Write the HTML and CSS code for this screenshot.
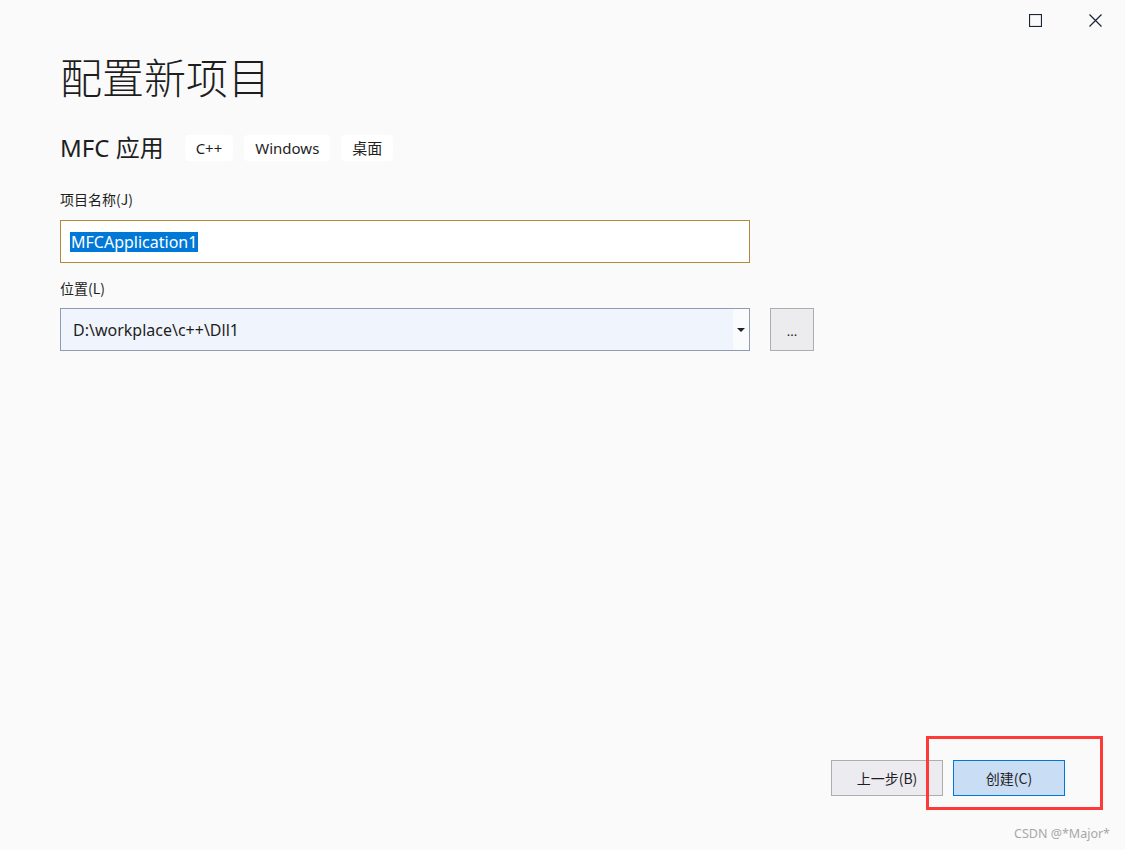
FILE: index.html
```html
<!DOCTYPE html>
<html lang="zh-CN">
<head>
<meta charset="utf-8">
<title>配置新项目</title>
<link rel="stylesheet" href="styles.css">
</head>
<body>
<div class="window">
  <div class="titlebar">
    <div class="ctl">
      <svg width="13" height="13" viewBox="0 0 13 13"><rect x="0.5" y="0.5" width="12" height="12" fill="none" stroke="#1b2433" stroke-width="1.2"/></svg>
    </div>
    <div class="ctl">
      <svg width="13" height="13" viewBox="0 0 13 13"><path d="M0.5 0.5 L12.5 12.5 M12.5 0.5 L0.5 12.5" stroke="#1b2433" stroke-width="1.2" fill="none"/></svg>
    </div>
  </div>

  <main class="content">
    <h1 class="title">配置新项目</h1>
    <div class="subrow">
      <span class="subtitle">MFC 应用</span>
      <div class="tags">
        <span class="tag">C++</span>
        <span class="tag">Windows</span>
        <span class="tag">桌面</span>
      </div>
    </div>

    <label class="label first">项目名称(J)</label>
    <div class="textbox"><span class="sel">MFCApplication1</span></div>

    <label class="label">位置(L)</label>
    <div class="locrow">
      <div class="combo">
        <span class="combo-text">D:\workplace\c++\Dll1</span>
        <span class="combo-drop"><span class="arrow"></span></span>
      </div>
      <div class="browse">...</div>
    </div>
  </main>

  <footer class="footer">
    <div class="actions">
      <button class="btn">上一步(B)</button>
      <button class="btn primary">创建(C)<span class="mark"></span></button>
    </div>
    <div class="watermark">CSDN @*Major*</div>
  </footer>
</div>
</body>
</html>
```

FILE: styles.css
```css
* { box-sizing: border-box; }

html, body {
  margin: 0;
  padding: 0;
  background: #fafafa;
}

body {
  font-family: "Noto Sans", "Noto Sans CJK SC", sans-serif;
  color: #1e1e1e;
}

.window {
  height: 850px;
  display: flex;
  flex-direction: column;
}

.titlebar {
  height: 40px;
  display: flex;
  justify-content: flex-end;
}

.ctl {
  width: 60px;
  height: 40px;
  display: flex;
  align-items: center;
  justify-content: center;
}

.content {
  padding-left: 60px;
}

.title {
  margin: 12px 0 0 0;
  font-family: "Noto Sans CJK SC", sans-serif;
  font-weight: 300;
  font-size: 42px;
  line-height: 48px;
  letter-spacing: 0;
}

.subrow {
  display: flex;
  align-items: center;
  margin-top: 35px;
  height: 26px;
}

.subtitle {
  font-family: "Noto Sans", "Noto Sans CJK SC", sans-serif;
  font-size: 24px;
  line-height: 26px;
}

.tags {
  display: flex;
  gap: 11px;
  margin-left: 21px;
}

.tag {
  background: #ffffff;
  border-radius: 4px;
  height: 26px;
  padding: 0 11px;
  font-size: 15px;
  line-height: 26px;
}

.label {
  display: block;
  font-family: "Noto Sans CJK SC", sans-serif;
  font-size: 14px;
  line-height: 20px;
  margin-top: 15px;
}

.label.first {
  margin-top: 28px;
}

.textbox {
  margin-top: 11px;
  width: 690px;
  height: 43px;
  border: 1px solid #b08a3a;
  background: #ffffff;
  display: flex;
  align-items: center;
  padding-left: 9px;
}

.sel {
  background: #0078d7;
  color: #ffffff;
  font-size: 16px;
  line-height: 20px;
  padding: 0 1px;
}

.locrow {
  display: flex;
  gap: 20px;
  margin-top: 10px;
}

.combo {
  width: 690px;
  height: 43px;
  border: 1px solid #8e9bb1;
  background: #f0f4fc;
  display: flex;
  align-items: stretch;
}

.combo-text {
  flex: 1;
  display: flex;
  align-items: center;
  padding-left: 12px;
  font-size: 16px;
}

.combo-drop {
  width: 16px;
  background: #fafbfd;
  display: flex;
  align-items: center;
  justify-content: center;
}

.arrow {
  width: 0;
  height: 0;
  border-left: 4px solid transparent;
  border-right: 4px solid transparent;
  border-top: 4px solid #1e1e2e;
}

.browse {
  width: 44px;
  height: 43px;
  border: 1px solid #adadad;
  background: #ececef;
  display: flex;
  align-items: center;
  justify-content: center;
  font-size: 13px;
  padding-top: 3px;
  color: #1e1e1e;
}

.footer {
  margin-top: auto;
  display: flex;
  flex-direction: column;
  align-items: flex-end;
  padding-bottom: 8px;
}

.actions {
  display: flex;
  gap: 10px;
  padding-right: 60px;
}

.btn {
  position: relative;
  width: 112px;
  height: 36px;
  border: 1px solid #adadad;
  background: #ececf0;
  font-family: "Noto Sans CJK SC", sans-serif;
  font-size: 14px;
  color: #1e1e1e;
  padding: 0;
}

.btn.primary {
  background: #c9ddf4;
  border-color: #0078d7;
}

.mark {
  position: absolute;
  left: -28px;
  top: -25px;
  width: 177px;
  height: 74px;
  border: 3px solid #ff3838;
}

.watermark {
  margin-top: 30px;
  padding-right: 15px;
  font-size: 12.5px;
  line-height: 16px;
  color: #a8a8a8;
}
```
